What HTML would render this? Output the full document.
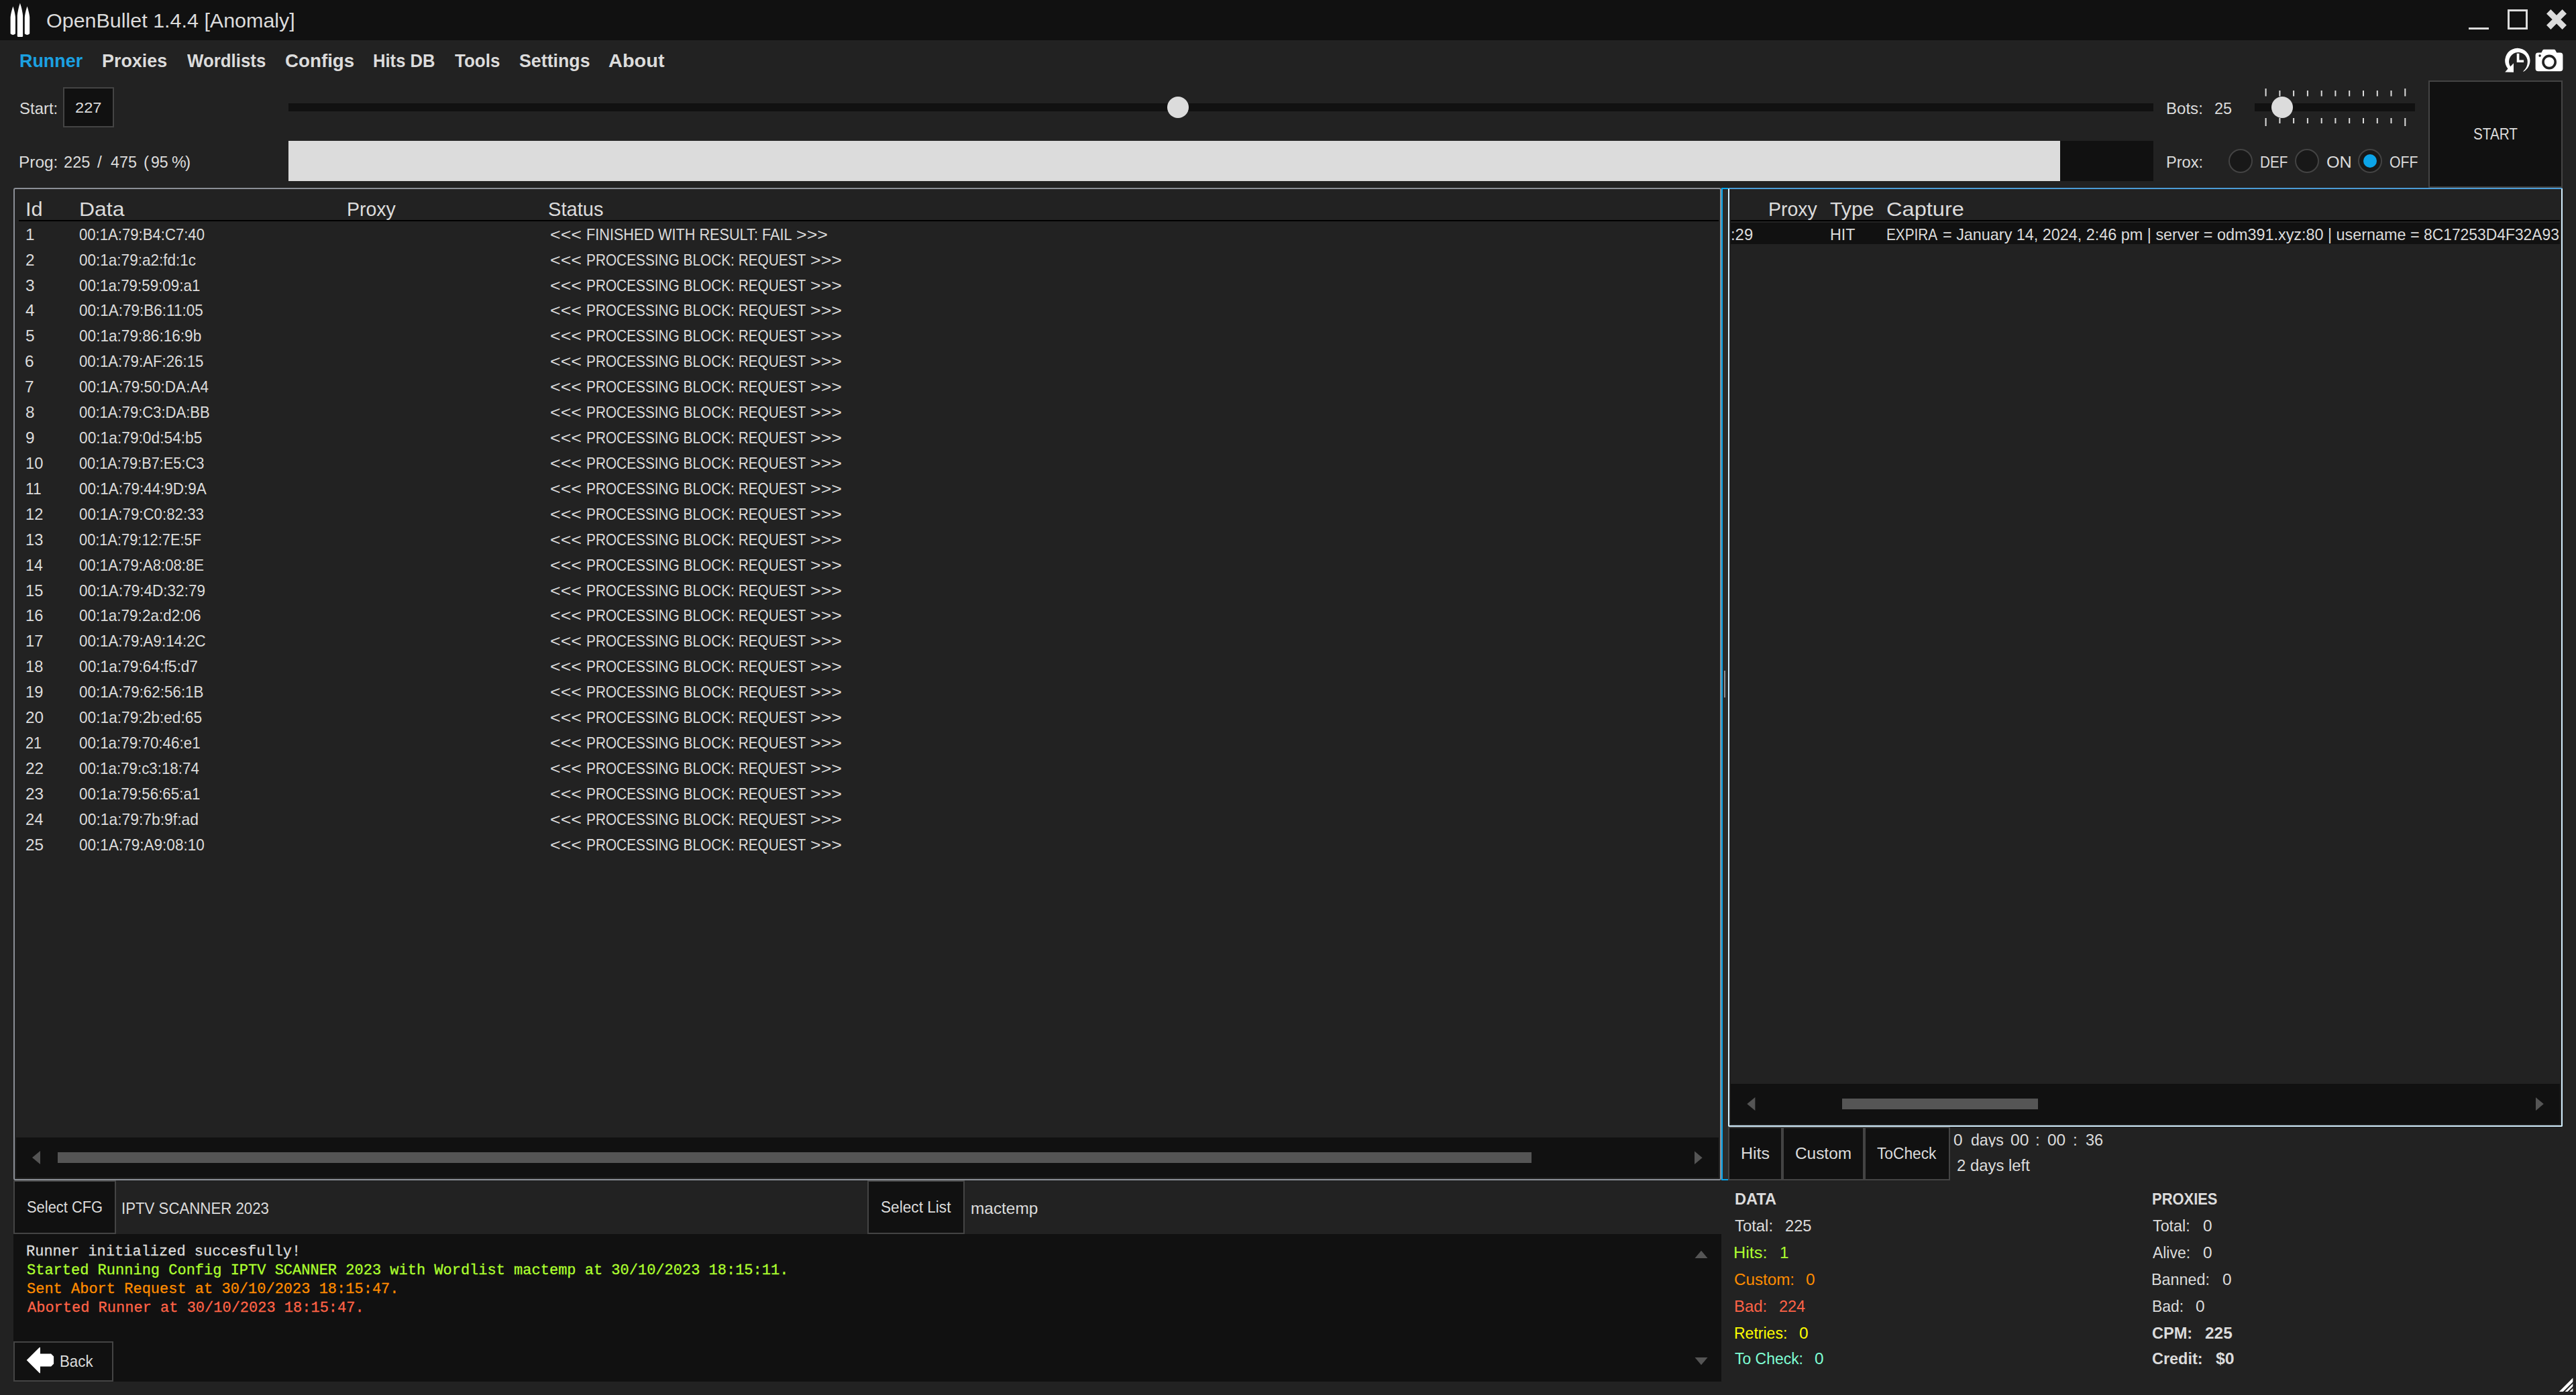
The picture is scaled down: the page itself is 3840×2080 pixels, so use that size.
<!DOCTYPE html>
<html lang="en"><head><meta charset="utf-8"><title>OpenBullet 1.4.4 [Anomaly]</title>
<style>
html,body{margin:0;padding:0}
body{width:3840px;height:2080px;background:#222;overflow:hidden;position:relative;font-family:'Liberation Sans',sans-serif;color:#dcdcdc}
.a,.t,svg{position:absolute}
.a{box-sizing:border-box}
.t{white-space:pre;transform-origin:0 0}
.d{background:#111}
.btn{background:#111;border:2px solid #444}
.th{background:#555}
.m{-webkit-text-stroke:0.3px}
.cl{clip-path:inset(0 0 5.5px 0)}
</style></head><body>
<!-- title bar -->
<div class="a d" style="left:0;top:0;width:3840px;height:60px"></div>
<svg style="left:14px;top:3px" width="32" height="54" viewBox="14 3 32 54"><g fill="#fff">
<path d="M19.4 9.4 C20.6 13 22.6 20 23 26 L23 50.2 Q19.3 53.6 15.6 50.2 L15.6 26 C16 20 18.2 13 19.4 9.4Z"/>
<path d="M29.9 4.4 C31.4 9 33.6 17 34.1 23.5 L34.1 53.4 Q34 55 33 55 L27 55 Q26 55 25.8 53.4 L25.8 23.5 C26.2 17 28.4 9 29.9 4.4Z"/>
<path d="M40.5 9.4 C41.7 13 43.8 20 44.2 26 L44.2 50.2 Q40.5 53.6 36.8 50.2 L36.8 26 C37.2 20 39.3 13 40.5 9.4Z"/>
</g></svg>
<div class="a" style="left:3680px;top:41px;width:30px;height:3px;background:#dcdcdc"></div>
<div class="a" style="left:3738px;top:14px;width:30px;height:30px;border:3px solid #dcdcdc"></div>
<svg style="left:3796px;top:14px" width="30" height="30" viewBox="0 0 30 30"><path d="M3.2 3.2L26.8 26.8M26.8 3.2L3.2 26.8" stroke="#dcdcdc" stroke-width="9" fill="none"/></svg>
<!-- history + camera icons -->
<svg style="left:3732px;top:70px" width="42" height="40" viewBox="3732 70 42 40">
<path d="M3761.6 106.9A18.65 18.65 0 1 0 3738.5 102.4L3734.2 107.6L3747 107.8L3747 94.3L3742.18 99.3A13.86 13.86 0 1 1 3767.76 91.9Q3768 100 3761.3 106.3Z" fill="#fff"/>
<path d="M3751.7 79.7H3755.4V89.5H3762.1V93.1H3751.7Z" fill="#fff"/>
</svg>
<svg style="left:3778px;top:72px" width="44" height="36" viewBox="3778 72 44 36">
<path d="M3783.6 78.5L3788.4 78.5L3790.4 74.8Q3791 73.8 3792.2 73.8L3807.4 73.8Q3808.6 73.8 3809.2 74.8L3811.2 78.5L3816.4 78.5Q3820.4 78.5 3820.4 82.5L3820.4 102.2Q3820.4 106.2 3816.4 106.2L3783.6 106.2Q3779.6 106.2 3779.6 102.2L3779.6 82.5Q3779.6 78.5 3783.6 78.5Z" fill="#fff"/>
<circle cx="3800.1" cy="92.5" r="9.1" fill="none" stroke="#222" stroke-width="3.6"/>
<circle cx="3786.1" cy="83.1" r="1.8" fill="#222"/>
</svg>
<!-- start / slider -->
<div class="a btn" style="left:94px;top:130px;width:76px;height:60px"></div>
<div class="a d" style="left:430px;top:154px;width:2780px;height:12px"></div>
<div class="a" style="left:1740px;top:144px;width:32px;height:32px;border-radius:50%;background:#dcdcdc"></div>
<!-- progress -->
<div class="a d" style="left:430px;top:210px;width:2780px;height:60px"><div class="a" style="left:0;top:0;width:2641px;height:60px;background:#dcdcdc"></div></div>
<!-- bots slider -->
<div class="a d" style="left:3361px;top:154px;width:239px;height:12px"></div>
<svg style="left:3370px;top:130px" width="222" height="60" viewBox="3370 130 222 60"><path id="ticks" d="M3377.6 132V143.6M3377.6 176V188M3398.4 135V143.6M3398.4 176V184M3419.1 135V143.6M3419.1 176V184M3439.9 135V143.6M3439.9 176V184M3460.7 135V143.6M3460.7 176V184M3481.4 135V143.6M3481.4 176V184M3502.2 135V143.6M3502.2 176V184M3523.0 135V143.6M3523.0 176V184M3543.8 135V143.6M3543.8 176V184M3564.5 135V143.6M3564.5 176V184M3585.3 132V143.6M3585.3 176V188" stroke="#dcdcdc" stroke-width="2" fill="none"/></svg>
<div class="a" style="left:3385.6px;top:144px;width:32px;height:32px;border-radius:50%;background:#dcdcdc"></div>
<!-- radios -->
<div class="a" style="left:3322px;top:222px;width:36px;height:36px;border-radius:50%;background:#181818;border:2px solid #434343"></div>
<div class="a" style="left:3421px;top:222px;width:36px;height:36px;border-radius:50%;background:#181818;border:2px solid #434343"></div>
<div class="a" style="left:3514.6px;top:222px;width:36px;height:36px;border-radius:50%;background:#181818;border:2px solid #434343"></div>
<div class="a" style="left:3522.8px;top:230px;width:20px;height:20px;border-radius:50%;background:#0ca4e8"></div>
<!-- start button -->
<div class="a btn" style="left:3620px;top:120px;width:200px;height:160px"></div>
<!-- left table -->
<div class="a" style="left:20px;top:280px;width:2546px;height:1480px;border:2px solid #8b8f96;border-radius:3px"></div>
<div class="a" style="left:28px;top:328px;width:2534px;height:2px;background:#000"></div>
<div class="a d" style="left:24px;top:1696px;width:2538px;height:60px"></div>
<div class="a th" style="left:86px;top:1718px;width:2197px;height:16px"></div>
<svg style="left:44px;top:1712px" width="20" height="28" viewBox="44 1712 20 28"><path d="M48 1726L60 1716V1736Z" fill="#555"/></svg>
<svg style="left:2522px;top:1712px" width="20" height="28" viewBox="2522 1712 20 28"><path d="M2537.6 1726.3L2526 1716.6V1736Z" fill="#555"/></svg>
<!-- splitter -->
<div class="a" style="left:2566px;top:280px;width:10px;height:1480px;background:#2a2a2a;border-left:2px solid #06a6ee;border-top:2px solid #06a6ee;border-bottom:2px solid #06a6ee"></div>
<div class="a" style="left:2570px;top:1000px;width:2px;height:40px;background:#8b8f96"></div>
<!-- right table -->
<div class="a" style="left:2576px;top:280px;width:1244px;height:1400px;border:2px solid #d3efff;border-top-color:#4b9cd6;border-radius:2px"></div>
<div class="a" style="left:2580px;top:328px;width:1236px;height:2px;background:#000"></div>
<div class="a d" style="left:2580px;top:332px;width:1236px;height:32px"></div>
<div class="a d" style="left:2580px;top:1616px;width:1236px;height:60px"></div>
<div class="a th" style="left:2746px;top:1638px;width:292px;height:16px"></div>
<svg style="left:2600px;top:1632px" width="20" height="28" viewBox="2600 1632 20 28"><path d="M2604.3 1646L2616.4 1636V1656Z" fill="#555"/></svg>
<svg style="left:3776px;top:1632px" width="20" height="28" viewBox="3776 1632 20 28"><path d="M3791.8 1646L3780 1636.2V1656Z" fill="#555"/></svg>
<!-- hits/custom/tocheck -->
<div class="a btn" style="left:2576px;top:1680px;width:81px;height:80px"></div>
<div class="a btn" style="left:2657px;top:1680px;width:122px;height:80px"></div>
<div class="a btn" style="left:2779px;top:1680px;width:128px;height:80px"></div>
<!-- bottom left -->
<div class="a btn" style="left:20px;top:1760px;width:153px;height:80px"></div>
<div class="a btn" style="left:1293px;top:1760px;width:145px;height:80px"></div>
<div class="a d" style="left:20px;top:1840px;width:2546px;height:220px"></div>
<svg style="left:2524px;top:1860px" width="24" height="180" viewBox="2524 1860 24 180"><path d="M2526.5 1875.9L2536 1864.7L2545.5 1875.9ZM2526.5 2024L2536 2035.2L2545.5 2024Z" fill="#555"/></svg>
<div class="a btn" style="left:20px;top:2000px;width:149px;height:60px"></div>
<svg style="left:38px;top:2006px" width="44" height="44" viewBox="38 2006 44 44"><path d="M39.7 2028.1L58.6 2009.2Q60 2007.8 60 2010V2018.5H76.1L80.1 2022.5V2033.4L76.1 2037.4H60V2046Q60 2048.4 58.6 2047Z" fill="#fff"/></svg>
<!-- resize grip -->
<svg style="left:3812px;top:2052px" width="26" height="26" viewBox="3812 2052 26 26"><path d="M3835.3 2054.6V2075H3814.8Z" fill="#fff"/><path d="M3821.2 2076L3836.3 2060.9M3828 2076L3836.3 2067.7" stroke="#222" stroke-width="2" fill="none"/></svg>
<span class="t" style="left:69.00px;top:12.15px;font-size:29.3px;line-height:38px;transform:scaleX(1.0397);">OpenBullet 1.4.4 [Anomaly]</span>
<span class="t" style="left:29.00px;top:73.38px;font-size:27.2px;line-height:35px;font-weight:700;color:#1ba1e2;transform:scaleX(0.9892);">Runner</span>
<span class="t" style="left:152.00px;top:73.38px;font-size:27.2px;line-height:35px;font-weight:700;transform:scaleX(0.9895);">Proxies</span>
<span class="t" style="left:279.00px;top:73.38px;font-size:27.2px;line-height:35px;font-weight:700;transform:scaleX(0.9508);">Wordlists</span>
<span class="t" style="left:425.00px;top:73.38px;font-size:27.2px;line-height:35px;font-weight:700;transform:scaleX(1.0202);">Configs</span>
<span class="t" style="left:556.00px;top:73.38px;font-size:27.2px;line-height:35px;font-weight:700;transform:scaleX(0.9421);">Hits DB</span>
<span class="t" style="left:678.00px;top:73.38px;font-size:27.2px;line-height:35px;font-weight:700;transform:scaleX(0.9565);">Tools</span>
<span class="t" style="left:774.00px;top:73.38px;font-size:27.2px;line-height:35px;font-weight:700;transform:scaleX(0.9848);">Settings</span>
<span class="t" style="left:907.00px;top:73.38px;font-size:27.2px;line-height:35px;font-weight:700;transform:scaleX(1.0649);">About</span>
<span class="t" style="left:29.00px;top:145.85px;font-size:24.4px;line-height:32px;transform:scaleX(0.9818);">Start:</span>
<span class="t" style="left:112.00px;top:146.04px;font-size:22.4px;line-height:29px;transform:scaleX(1.0571);">227</span>
<span class="t" style="left:28.00px;top:225.85px;font-size:24.4px;line-height:32px;">Prog:</span>
<span class="t" style="left:95.00px;top:225.85px;font-size:24.4px;line-height:32px;transform:scaleX(0.9688);">225</span>
<span class="t" style="left:145.00px;top:225.85px;font-size:24.4px;line-height:32px;">/</span>
<span class="t" style="left:165.00px;top:225.85px;font-size:24.4px;line-height:32px;transform:scaleX(0.9564);">475</span>
<span class="t" style="left:214.00px;top:225.85px;font-size:24.4px;line-height:32px;">(</span>
<span class="t" style="left:225.00px;top:225.85px;font-size:24.4px;line-height:32px;transform:scaleX(0.9480);">95</span>
<span class="t" style="left:256.00px;top:225.85px;font-size:24.4px;line-height:32px;">%</span>
<span class="t" style="left:276.00px;top:225.85px;font-size:24.4px;line-height:32px;">)</span>
<span class="t" style="left:3229.00px;top:145.85px;font-size:24.4px;line-height:32px;transform:scaleX(0.9864);">Bots:</span>
<span class="t" style="left:3301.00px;top:145.85px;font-size:24.4px;line-height:32px;transform:scaleX(0.9600);">25</span>
<span class="t" style="left:3229.00px;top:225.85px;font-size:24.4px;line-height:32px;transform:scaleX(0.9676);">Prox:</span>
<span class="t" style="left:3369.00px;top:225.85px;font-size:24.4px;line-height:32px;transform:scaleX(0.8478);">DEF</span>
<span class="t" style="left:3468.00px;top:225.85px;font-size:24.4px;line-height:32px;transform:scaleX(1.0328);">ON</span>
<span class="t" style="left:3562.00px;top:225.85px;font-size:24.4px;line-height:32px;transform:scaleX(0.8723);">OFF</span>
<span class="t" style="left:3687.00px;top:183.85px;font-size:24.4px;line-height:32px;transform:scaleX(0.8487);">START</span>
<span class="t" style="left:38.00px;top:293.15px;font-size:29.3px;line-height:38px;transform:scaleX(1.0500);">Id</span>
<span class="t" style="left:118.00px;top:293.15px;font-size:29.3px;line-height:38px;transform:scaleX(1.0908);">Data</span>
<span class="t" style="left:517.00px;top:293.15px;font-size:29.3px;line-height:38px;transform:scaleX(0.9722);">Proxy</span>
<span class="t" style="left:817.00px;top:293.15px;font-size:29.3px;line-height:38px;transform:scaleX(0.9938);">Status</span>
<span class="t" style="left:38.00px;top:333.85px;font-size:24.4px;line-height:32px;">1</span>
<span class="t" style="left:118.00px;top:333.85px;font-size:24.4px;line-height:32px;transform:scaleX(0.9071);">00:1A:79:B4:C7:40</span>
<span class="t" style="left:820.00px;top:333.85px;font-size:24.4px;line-height:32px;transform:scaleX(1.0988);">&lt;&lt;&lt;</span>
<span class="t" style="left:874.00px;top:333.85px;font-size:24.4px;line-height:32px;transform:scaleX(0.8880);">FINISHED WITH RESULT: FAIL</span>
<span class="t" style="left:1187.00px;top:333.85px;font-size:24.4px;line-height:32px;transform:scaleX(1.0988);">&gt;&gt;&gt;</span>
<span class="t" style="left:38.00px;top:371.85px;font-size:24.4px;line-height:32px;">2</span>
<span class="t" style="left:118.00px;top:371.85px;font-size:24.4px;line-height:32px;transform:scaleX(0.9235);">00:1a:79:a2:fd:1c</span>
<span class="t" style="left:820.00px;top:371.85px;font-size:24.4px;line-height:32px;transform:scaleX(1.0988);">&lt;&lt;&lt;</span>
<span class="t" style="left:874.00px;top:371.85px;font-size:24.4px;line-height:32px;transform:scaleX(0.8533);">PROCESSING BLOCK: REQUEST</span>
<span class="t" style="left:1208.00px;top:371.85px;font-size:24.4px;line-height:32px;transform:scaleX(1.0988);">&gt;&gt;&gt;</span>
<span class="t" style="left:38.00px;top:409.85px;font-size:24.4px;line-height:32px;">3</span>
<span class="t" style="left:118.00px;top:409.85px;font-size:24.4px;line-height:32px;transform:scaleX(0.9169);">00:1a:79:59:09:a1</span>
<span class="t" style="left:820.00px;top:409.85px;font-size:24.4px;line-height:32px;transform:scaleX(1.0988);">&lt;&lt;&lt;</span>
<span class="t" style="left:874.00px;top:409.85px;font-size:24.4px;line-height:32px;transform:scaleX(0.8533);">PROCESSING BLOCK: REQUEST</span>
<span class="t" style="left:1208.00px;top:409.85px;font-size:24.4px;line-height:32px;transform:scaleX(1.0988);">&gt;&gt;&gt;</span>
<span class="t" style="left:38.00px;top:446.85px;font-size:24.4px;line-height:32px;">4</span>
<span class="t" style="left:118.00px;top:446.85px;font-size:24.4px;line-height:32px;transform:scaleX(0.9226);">00:1A:79:B6:11:05</span>
<span class="t" style="left:820.00px;top:446.85px;font-size:24.4px;line-height:32px;transform:scaleX(1.0988);">&lt;&lt;&lt;</span>
<span class="t" style="left:874.00px;top:446.85px;font-size:24.4px;line-height:32px;transform:scaleX(0.8533);">PROCESSING BLOCK: REQUEST</span>
<span class="t" style="left:1208.00px;top:446.85px;font-size:24.4px;line-height:32px;transform:scaleX(1.0988);">&gt;&gt;&gt;</span>
<span class="t" style="left:38.00px;top:484.85px;font-size:24.4px;line-height:32px;">5</span>
<span class="t" style="left:118.00px;top:484.85px;font-size:24.4px;line-height:32px;transform:scaleX(0.9266);">00:1a:79:86:16:9b</span>
<span class="t" style="left:820.00px;top:484.85px;font-size:24.4px;line-height:32px;transform:scaleX(1.0988);">&lt;&lt;&lt;</span>
<span class="t" style="left:874.00px;top:484.85px;font-size:24.4px;line-height:32px;transform:scaleX(0.8533);">PROCESSING BLOCK: REQUEST</span>
<span class="t" style="left:1208.00px;top:484.85px;font-size:24.4px;line-height:32px;transform:scaleX(1.0988);">&gt;&gt;&gt;</span>
<span class="t" style="left:37.00px;top:522.85px;font-size:24.4px;line-height:32px;">6</span>
<span class="t" style="left:118.00px;top:522.85px;font-size:24.4px;line-height:32px;transform:scaleX(0.9113);">00:1A:79:AF:26:15</span>
<span class="t" style="left:820.00px;top:522.85px;font-size:24.4px;line-height:32px;transform:scaleX(1.0988);">&lt;&lt;&lt;</span>
<span class="t" style="left:874.00px;top:522.85px;font-size:24.4px;line-height:32px;transform:scaleX(0.8533);">PROCESSING BLOCK: REQUEST</span>
<span class="t" style="left:1208.00px;top:522.85px;font-size:24.4px;line-height:32px;transform:scaleX(1.0988);">&gt;&gt;&gt;</span>
<span class="t" style="left:37.00px;top:560.85px;font-size:24.4px;line-height:32px;">7</span>
<span class="t" style="left:118.00px;top:560.85px;font-size:24.4px;line-height:32px;transform:scaleX(0.9241);">00:1A:79:50:DA:A4</span>
<span class="t" style="left:820.00px;top:560.85px;font-size:24.4px;line-height:32px;transform:scaleX(1.0988);">&lt;&lt;&lt;</span>
<span class="t" style="left:874.00px;top:560.85px;font-size:24.4px;line-height:32px;transform:scaleX(0.8533);">PROCESSING BLOCK: REQUEST</span>
<span class="t" style="left:1208.00px;top:560.85px;font-size:24.4px;line-height:32px;transform:scaleX(1.0988);">&gt;&gt;&gt;</span>
<span class="t" style="left:38.00px;top:598.85px;font-size:24.4px;line-height:32px;">8</span>
<span class="t" style="left:118.00px;top:598.85px;font-size:24.4px;line-height:32px;transform:scaleX(0.9028);">00:1A:79:C3:DA:BB</span>
<span class="t" style="left:820.00px;top:598.85px;font-size:24.4px;line-height:32px;transform:scaleX(1.0988);">&lt;&lt;&lt;</span>
<span class="t" style="left:874.00px;top:598.85px;font-size:24.4px;line-height:32px;transform:scaleX(0.8533);">PROCESSING BLOCK: REQUEST</span>
<span class="t" style="left:1208.00px;top:598.85px;font-size:24.4px;line-height:32px;transform:scaleX(1.0988);">&gt;&gt;&gt;</span>
<span class="t" style="left:38.00px;top:636.85px;font-size:24.4px;line-height:32px;">9</span>
<span class="t" style="left:118.00px;top:636.85px;font-size:24.4px;line-height:32px;transform:scaleX(0.9327);">00:1a:79:0d:54:b5</span>
<span class="t" style="left:820.00px;top:636.85px;font-size:24.4px;line-height:32px;transform:scaleX(1.0988);">&lt;&lt;&lt;</span>
<span class="t" style="left:874.00px;top:636.85px;font-size:24.4px;line-height:32px;transform:scaleX(0.8533);">PROCESSING BLOCK: REQUEST</span>
<span class="t" style="left:1208.00px;top:636.85px;font-size:24.4px;line-height:32px;transform:scaleX(1.0988);">&gt;&gt;&gt;</span>
<span class="t" style="left:38.00px;top:674.85px;font-size:24.4px;line-height:32px;transform:scaleX(0.9697);">10</span>
<span class="t" style="left:118.00px;top:674.85px;font-size:24.4px;line-height:32px;transform:scaleX(0.8923);">00:1A:79:B7:E5:C3</span>
<span class="t" style="left:820.00px;top:674.85px;font-size:24.4px;line-height:32px;transform:scaleX(1.0988);">&lt;&lt;&lt;</span>
<span class="t" style="left:874.00px;top:674.85px;font-size:24.4px;line-height:32px;transform:scaleX(0.8533);">PROCESSING BLOCK: REQUEST</span>
<span class="t" style="left:1208.00px;top:674.85px;font-size:24.4px;line-height:32px;transform:scaleX(1.0988);">&gt;&gt;&gt;</span>
<span class="t" style="left:38.00px;top:712.85px;font-size:24.4px;line-height:32px;transform:scaleX(0.9396);">11</span>
<span class="t" style="left:118.00px;top:712.85px;font-size:24.4px;line-height:32px;transform:scaleX(0.9207);">00:1A:79:44:9D:9A</span>
<span class="t" style="left:820.00px;top:712.85px;font-size:24.4px;line-height:32px;transform:scaleX(1.0988);">&lt;&lt;&lt;</span>
<span class="t" style="left:874.00px;top:712.85px;font-size:24.4px;line-height:32px;transform:scaleX(0.8533);">PROCESSING BLOCK: REQUEST</span>
<span class="t" style="left:1208.00px;top:712.85px;font-size:24.4px;line-height:32px;transform:scaleX(1.0988);">&gt;&gt;&gt;</span>
<span class="t" style="left:38.00px;top:750.85px;font-size:24.4px;line-height:32px;transform:scaleX(0.9697);">12</span>
<span class="t" style="left:118.00px;top:750.85px;font-size:24.4px;line-height:32px;transform:scaleX(0.9143);">00:1A:79:C0:82:33</span>
<span class="t" style="left:820.00px;top:750.85px;font-size:24.4px;line-height:32px;transform:scaleX(1.0988);">&lt;&lt;&lt;</span>
<span class="t" style="left:874.00px;top:750.85px;font-size:24.4px;line-height:32px;transform:scaleX(0.8533);">PROCESSING BLOCK: REQUEST</span>
<span class="t" style="left:1208.00px;top:750.85px;font-size:24.4px;line-height:32px;transform:scaleX(1.0988);">&gt;&gt;&gt;</span>
<span class="t" style="left:38.00px;top:788.85px;font-size:24.4px;line-height:32px;transform:scaleX(0.9697);">13</span>
<span class="t" style="left:118.00px;top:788.85px;font-size:24.4px;line-height:32px;transform:scaleX(0.8948);">00:1A:79:12:7E:5F</span>
<span class="t" style="left:820.00px;top:788.85px;font-size:24.4px;line-height:32px;transform:scaleX(1.0988);">&lt;&lt;&lt;</span>
<span class="t" style="left:874.00px;top:788.85px;font-size:24.4px;line-height:32px;transform:scaleX(0.8533);">PROCESSING BLOCK: REQUEST</span>
<span class="t" style="left:1208.00px;top:788.85px;font-size:24.4px;line-height:32px;transform:scaleX(1.0988);">&gt;&gt;&gt;</span>
<span class="t" style="left:38.00px;top:826.85px;font-size:24.4px;line-height:32px;transform:scaleX(0.9499);">14</span>
<span class="t" style="left:118.00px;top:826.85px;font-size:24.4px;line-height:32px;transform:scaleX(0.9090);">00:1A:79:A8:08:8E</span>
<span class="t" style="left:820.00px;top:826.85px;font-size:24.4px;line-height:32px;transform:scaleX(1.0988);">&lt;&lt;&lt;</span>
<span class="t" style="left:874.00px;top:826.85px;font-size:24.4px;line-height:32px;transform:scaleX(0.8533);">PROCESSING BLOCK: REQUEST</span>
<span class="t" style="left:1208.00px;top:826.85px;font-size:24.4px;line-height:32px;transform:scaleX(1.0988);">&gt;&gt;&gt;</span>
<span class="t" style="left:38.00px;top:864.85px;font-size:24.4px;line-height:32px;transform:scaleX(0.9697);">15</span>
<span class="t" style="left:118.00px;top:864.85px;font-size:24.4px;line-height:32px;transform:scaleX(0.9241);">00:1A:79:4D:32:79</span>
<span class="t" style="left:820.00px;top:864.85px;font-size:24.4px;line-height:32px;transform:scaleX(1.0988);">&lt;&lt;&lt;</span>
<span class="t" style="left:874.00px;top:864.85px;font-size:24.4px;line-height:32px;transform:scaleX(0.8533);">PROCESSING BLOCK: REQUEST</span>
<span class="t" style="left:1208.00px;top:864.85px;font-size:24.4px;line-height:32px;transform:scaleX(1.0988);">&gt;&gt;&gt;</span>
<span class="t" style="left:38.00px;top:901.85px;font-size:24.4px;line-height:32px;transform:scaleX(0.9697);">16</span>
<span class="t" style="left:118.00px;top:901.85px;font-size:24.4px;line-height:32px;transform:scaleX(0.9229);">00:1a:79:2a:d2:06</span>
<span class="t" style="left:820.00px;top:901.85px;font-size:24.4px;line-height:32px;transform:scaleX(1.0988);">&lt;&lt;&lt;</span>
<span class="t" style="left:874.00px;top:901.85px;font-size:24.4px;line-height:32px;transform:scaleX(0.8533);">PROCESSING BLOCK: REQUEST</span>
<span class="t" style="left:1208.00px;top:901.85px;font-size:24.4px;line-height:32px;transform:scaleX(1.0988);">&gt;&gt;&gt;</span>
<span class="t" style="left:38.00px;top:939.85px;font-size:24.4px;line-height:32px;transform:scaleX(0.9697);">17</span>
<span class="t" style="left:118.00px;top:939.85px;font-size:24.4px;line-height:32px;transform:scaleX(0.9156);">00:1A:79:A9:14:2C</span>
<span class="t" style="left:820.00px;top:939.85px;font-size:24.4px;line-height:32px;transform:scaleX(1.0988);">&lt;&lt;&lt;</span>
<span class="t" style="left:874.00px;top:939.85px;font-size:24.4px;line-height:32px;transform:scaleX(0.8533);">PROCESSING BLOCK: REQUEST</span>
<span class="t" style="left:1208.00px;top:939.85px;font-size:24.4px;line-height:32px;transform:scaleX(1.0988);">&gt;&gt;&gt;</span>
<span class="t" style="left:38.00px;top:977.85px;font-size:24.4px;line-height:32px;transform:scaleX(0.9697);">18</span>
<span class="t" style="left:118.00px;top:977.85px;font-size:24.4px;line-height:32px;transform:scaleX(0.9323);">00:1a:79:64:f5:d7</span>
<span class="t" style="left:820.00px;top:977.85px;font-size:24.4px;line-height:32px;transform:scaleX(1.0988);">&lt;&lt;&lt;</span>
<span class="t" style="left:874.00px;top:977.85px;font-size:24.4px;line-height:32px;transform:scaleX(0.8533);">PROCESSING BLOCK: REQUEST</span>
<span class="t" style="left:1208.00px;top:977.85px;font-size:24.4px;line-height:32px;transform:scaleX(1.0988);">&gt;&gt;&gt;</span>
<span class="t" style="left:38.00px;top:1015.85px;font-size:24.4px;line-height:32px;transform:scaleX(0.9697);">19</span>
<span class="t" style="left:118.00px;top:1015.85px;font-size:24.4px;line-height:32px;transform:scaleX(0.9180);">00:1A:79:62:56:1B</span>
<span class="t" style="left:820.00px;top:1015.85px;font-size:24.4px;line-height:32px;transform:scaleX(1.0988);">&lt;&lt;&lt;</span>
<span class="t" style="left:874.00px;top:1015.85px;font-size:24.4px;line-height:32px;transform:scaleX(0.8533);">PROCESSING BLOCK: REQUEST</span>
<span class="t" style="left:1208.00px;top:1015.85px;font-size:24.4px;line-height:32px;transform:scaleX(1.0988);">&gt;&gt;&gt;</span>
<span class="t" style="left:38.00px;top:1053.85px;font-size:24.4px;line-height:32px;transform:scaleX(0.9949);">20</span>
<span class="t" style="left:118.00px;top:1053.85px;font-size:24.4px;line-height:32px;transform:scaleX(0.9307);">00:1a:79:2b:ed:65</span>
<span class="t" style="left:820.00px;top:1053.85px;font-size:24.4px;line-height:32px;transform:scaleX(1.0988);">&lt;&lt;&lt;</span>
<span class="t" style="left:874.00px;top:1053.85px;font-size:24.4px;line-height:32px;transform:scaleX(0.8533);">PROCESSING BLOCK: REQUEST</span>
<span class="t" style="left:1208.00px;top:1053.85px;font-size:24.4px;line-height:32px;transform:scaleX(1.0988);">&gt;&gt;&gt;</span>
<span class="t" style="left:38.00px;top:1091.85px;font-size:24.4px;line-height:32px;transform:scaleX(0.8909);">21</span>
<span class="t" style="left:118.00px;top:1091.85px;font-size:24.4px;line-height:32px;transform:scaleX(0.9186);">00:1a:79:70:46:e1</span>
<span class="t" style="left:820.00px;top:1091.85px;font-size:24.4px;line-height:32px;transform:scaleX(1.0988);">&lt;&lt;&lt;</span>
<span class="t" style="left:874.00px;top:1091.85px;font-size:24.4px;line-height:32px;transform:scaleX(0.8533);">PROCESSING BLOCK: REQUEST</span>
<span class="t" style="left:1208.00px;top:1091.85px;font-size:24.4px;line-height:32px;transform:scaleX(1.0988);">&gt;&gt;&gt;</span>
<span class="t" style="left:38.00px;top:1129.85px;font-size:24.4px;line-height:32px;transform:scaleX(0.9949);">22</span>
<span class="t" style="left:118.00px;top:1129.85px;font-size:24.4px;line-height:32px;transform:scaleX(0.9158);">00:1a:79:c3:18:74</span>
<span class="t" style="left:820.00px;top:1129.85px;font-size:24.4px;line-height:32px;transform:scaleX(1.0988);">&lt;&lt;&lt;</span>
<span class="t" style="left:874.00px;top:1129.85px;font-size:24.4px;line-height:32px;transform:scaleX(0.8533);">PROCESSING BLOCK: REQUEST</span>
<span class="t" style="left:1208.00px;top:1129.85px;font-size:24.4px;line-height:32px;transform:scaleX(1.0988);">&gt;&gt;&gt;</span>
<span class="t" style="left:38.00px;top:1167.85px;font-size:24.4px;line-height:32px;transform:scaleX(0.9949);">23</span>
<span class="t" style="left:118.00px;top:1167.85px;font-size:24.4px;line-height:32px;transform:scaleX(0.9169);">00:1a:79:56:65:a1</span>
<span class="t" style="left:820.00px;top:1167.85px;font-size:24.4px;line-height:32px;transform:scaleX(1.0988);">&lt;&lt;&lt;</span>
<span class="t" style="left:874.00px;top:1167.85px;font-size:24.4px;line-height:32px;transform:scaleX(0.8533);">PROCESSING BLOCK: REQUEST</span>
<span class="t" style="left:1208.00px;top:1167.85px;font-size:24.4px;line-height:32px;transform:scaleX(1.0988);">&gt;&gt;&gt;</span>
<span class="t" style="left:38.00px;top:1205.85px;font-size:24.4px;line-height:32px;transform:scaleX(0.9754);">24</span>
<span class="t" style="left:118.00px;top:1205.85px;font-size:24.4px;line-height:32px;transform:scaleX(0.9372);">00:1a:79:7b:9f:ad</span>
<span class="t" style="left:820.00px;top:1205.85px;font-size:24.4px;line-height:32px;transform:scaleX(1.0988);">&lt;&lt;&lt;</span>
<span class="t" style="left:874.00px;top:1205.85px;font-size:24.4px;line-height:32px;transform:scaleX(0.8533);">PROCESSING BLOCK: REQUEST</span>
<span class="t" style="left:1208.00px;top:1205.85px;font-size:24.4px;line-height:32px;transform:scaleX(1.0988);">&gt;&gt;&gt;</span>
<span class="t" style="left:38.00px;top:1243.85px;font-size:24.4px;line-height:32px;transform:scaleX(0.9949);">25</span>
<span class="t" style="left:118.00px;top:1243.85px;font-size:24.4px;line-height:32px;transform:scaleX(0.9243);">00:1A:79:A9:08:10</span>
<span class="t" style="left:820.00px;top:1243.85px;font-size:24.4px;line-height:32px;transform:scaleX(1.0988);">&lt;&lt;&lt;</span>
<span class="t" style="left:874.00px;top:1243.85px;font-size:24.4px;line-height:32px;transform:scaleX(0.8533);">PROCESSING BLOCK: REQUEST</span>
<span class="t" style="left:1208.00px;top:1243.85px;font-size:24.4px;line-height:32px;transform:scaleX(1.0988);">&gt;&gt;&gt;</span>
<span class="t" style="left:2636.00px;top:293.15px;font-size:29.3px;line-height:38px;transform:scaleX(0.9722);">Proxy</span>
<span class="t" style="left:2728.00px;top:293.15px;font-size:29.3px;line-height:38px;transform:scaleX(1.0309);">Type</span>
<span class="t" style="left:2812.00px;top:293.15px;font-size:29.3px;line-height:38px;transform:scaleX(1.1123);">Capture</span>
<span class="t" style="left:2580.00px;top:333.85px;font-size:24.4px;line-height:32px;transform:scaleX(0.9774);">:29</span>
<span class="t" style="left:2728.00px;top:333.85px;font-size:24.4px;line-height:32px;transform:scaleX(0.9534);">HIT</span>
<span class="t" style="left:2812.00px;top:333.85px;font-size:24.4px;line-height:32px;transform:scaleX(0.8514);">EXPIRA</span>
<span class="t" style="left:2896.00px;top:333.85px;font-size:24.4px;line-height:32px;transform:scaleX(0.9586);">= January 14, 2024, 2:46 pm | server = odm391.xyz:80 | username =</span>
<span class="t" style="left:3613.00px;top:333.85px;font-size:24.4px;line-height:32px;transform:scaleX(0.9368);">8C17253D4F32A93</span>
<span class="t" style="left:40.00px;top:1783.85px;font-size:24.4px;line-height:32px;transform:scaleX(0.8972);">Select CFG</span>
<span class="t" style="left:181.00px;top:1785.85px;font-size:24.4px;line-height:32px;transform:scaleX(0.9116);">IPTV SCANNER 2023</span>
<span class="t" style="left:1313.00px;top:1783.85px;font-size:24.4px;line-height:32px;transform:scaleX(0.9283);">Select List</span>
<span class="t" style="left:1447.00px;top:1785.85px;font-size:24.4px;line-height:32px;">mactemp</span>
<span class="t m" style="left:39.00px;top:1851.93px;font-size:22px;line-height:29px;font-family:'Liberation Mono', monospace;">Runner initialized succesfully!</span>
<span class="t m" style="left:40.00px;top:1879.93px;font-size:22px;line-height:29px;font-family:'Liberation Mono', monospace;color:#adff2f;">Started Running Config IPTV SCANNER 2023 with Wordlist mactemp at 30/10/2023 18:15:11.</span>
<span class="t m" style="left:40.00px;top:1907.93px;font-size:22px;line-height:29px;font-family:'Liberation Mono', monospace;color:#ff8c00;">Sent Abort Request at 30/10/2023 18:15:47.</span>
<span class="t m" style="left:41.00px;top:1935.93px;font-size:22px;line-height:29px;font-family:'Liberation Mono', monospace;color:#ff6347;">Aborted Runner at 30/10/2023 18:15:47.</span>
<span class="t" style="left:89.00px;top:2013.85px;font-size:24.4px;line-height:32px;transform:scaleX(0.9135);">Back</span>
<span class="t" style="left:2595.00px;top:1703.85px;font-size:24.4px;line-height:32px;transform:scaleX(1.0256);">Hits</span>
<span class="t" style="left:2676.00px;top:1703.85px;font-size:24.4px;line-height:32px;">Custom</span>
<span class="t" style="left:2798.00px;top:1703.85px;font-size:24.4px;line-height:32px;transform:scaleX(0.9323);">ToCheck</span>
<span class="t" style="left:2912.00px;top:1683.85px;font-size:24.4px;line-height:32px;">0</span>
<span class="t cl" style="left:2938.00px;top:1683.85px;font-size:24.4px;line-height:32px;transform:scaleX(0.9475);">days</span>
<span class="t" style="left:2997.00px;top:1683.85px;font-size:24.4px;line-height:32px;transform:scaleX(1.0080);">00</span>
<span class="t" style="left:3034.00px;top:1683.85px;font-size:24.4px;line-height:32px;">:</span>
<span class="t" style="left:3052.00px;top:1683.85px;font-size:24.4px;line-height:32px;">00</span>
<span class="t" style="left:3090.00px;top:1683.85px;font-size:24.4px;line-height:32px;">:</span>
<span class="t" style="left:3109.00px;top:1683.85px;font-size:24.4px;line-height:32px;transform:scaleX(0.9640);">36</span>
<span class="t" style="left:2917.00px;top:1721.85px;font-size:24.4px;line-height:32px;transform:scaleX(0.9791);">2 days left</span>
<span class="t" style="left:2586.00px;top:1771.85px;font-size:24.4px;line-height:32px;font-weight:700;transform:scaleX(0.9677);">DATA</span>
<span class="t" style="left:2586.00px;top:1811.85px;font-size:24.4px;line-height:32px;transform:scaleX(0.9784);">Total:</span>
<span class="t" style="left:2661.00px;top:1811.85px;font-size:24.4px;line-height:32px;transform:scaleX(0.9688);">225</span>
<span class="t" style="left:2584.00px;top:1851.85px;font-size:24.4px;line-height:32px;color:#adff2f;transform:scaleX(1.0337);">Hits:</span>
<span class="t" style="left:2653.00px;top:1851.85px;font-size:24.4px;line-height:32px;color:#adff2f;">1</span>
<span class="t" style="left:2585.00px;top:1891.85px;font-size:24.4px;line-height:32px;color:#ff8c00;transform:scaleX(0.9920);">Custom:</span>
<span class="t" style="left:2692.00px;top:1891.85px;font-size:24.4px;line-height:32px;color:#ff8c00;">0</span>
<span class="t" style="left:2585.00px;top:1931.85px;font-size:24.4px;line-height:32px;color:#ff6347;transform:scaleX(0.9783);">Bad:</span>
<span class="t" style="left:2652.00px;top:1931.85px;font-size:24.4px;line-height:32px;color:#ff6347;transform:scaleX(0.9615);">224</span>
<span class="t" style="left:2585.00px;top:1971.85px;font-size:24.4px;line-height:32px;color:#ffff00;transform:scaleX(0.9437);">Retries:</span>
<span class="t" style="left:2682.00px;top:1971.85px;font-size:24.4px;line-height:32px;color:#ffff00;">0</span>
<span class="t" style="left:2586.00px;top:2009.85px;font-size:24.4px;line-height:32px;color:#7fffd4;transform:scaleX(0.9403);">To Check:</span>
<span class="t" style="left:2705.00px;top:2009.85px;font-size:24.4px;line-height:32px;color:#7fffd4;">0</span>
<span class="t" style="left:3208.00px;top:1771.85px;font-size:24.4px;line-height:32px;font-weight:700;transform:scaleX(0.8991);">PROXIES</span>
<span class="t" style="left:3209.00px;top:1811.85px;font-size:24.4px;line-height:32px;transform:scaleX(0.9550);">Total:</span>
<span class="t" style="left:3284.00px;top:1811.85px;font-size:24.4px;line-height:32px;">0</span>
<span class="t" style="left:3209.00px;top:1851.85px;font-size:24.4px;line-height:32px;transform:scaleX(0.9391);">Alive:</span>
<span class="t" style="left:3284.00px;top:1851.85px;font-size:24.4px;line-height:32px;">0</span>
<span class="t" style="left:3207.00px;top:1891.85px;font-size:24.4px;line-height:32px;transform:scaleX(0.9572);">Banned:</span>
<span class="t" style="left:3313.00px;top:1891.85px;font-size:24.4px;line-height:32px;">0</span>
<span class="t" style="left:3208.00px;top:1931.85px;font-size:24.4px;line-height:32px;transform:scaleX(0.9391);">Bad:</span>
<span class="t" style="left:3273.00px;top:1931.85px;font-size:24.4px;line-height:32px;">0</span>
<span class="t" style="left:3208.00px;top:1971.85px;font-size:24.4px;line-height:32px;font-weight:700;transform:scaleX(0.9661);">CPM:</span>
<span class="t" style="left:3287.00px;top:1971.85px;font-size:24.4px;line-height:32px;font-weight:700;">225</span>
<span class="t" style="left:3208.00px;top:2009.85px;font-size:24.4px;line-height:32px;font-weight:700;transform:scaleX(0.9616);">Credit:</span>
<span class="t" style="left:3303.00px;top:2009.85px;font-size:24.4px;line-height:32px;font-weight:700;transform:scaleX(1.0196);">$0</span>
</body></html>
